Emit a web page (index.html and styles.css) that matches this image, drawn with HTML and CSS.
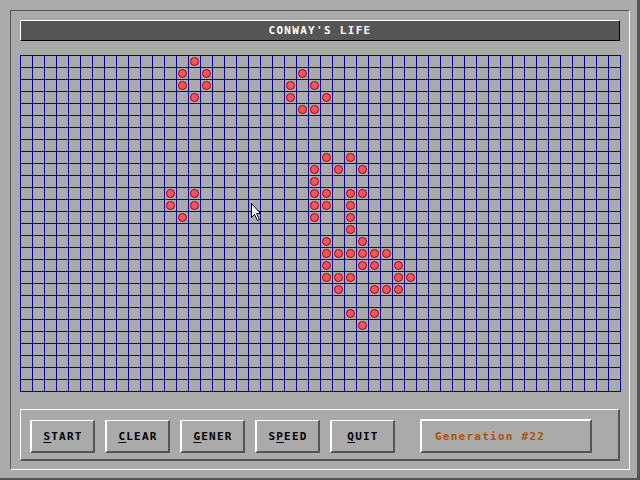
FILE: index.html
```html
<!DOCTYPE html>
<html>
<head>
<meta charset="utf-8">
<title>Conway's Life</title>
<link rel="stylesheet" href="styles.css">
</head>
<body>
<div class="screen">
  <div class="frame">
    <div class="title">CONWAY'S LIFE</div>
    <div class="board">
      <i class="cell" style="grid-area:1/15"></i>
      <i class="cell" style="grid-area:2/14"></i>
      <i class="cell" style="grid-area:2/16"></i>
      <i class="cell" style="grid-area:2/24"></i>
      <i class="cell" style="grid-area:3/14"></i>
      <i class="cell" style="grid-area:3/16"></i>
      <i class="cell" style="grid-area:3/23"></i>
      <i class="cell" style="grid-area:3/25"></i>
      <i class="cell" style="grid-area:4/15"></i>
      <i class="cell" style="grid-area:4/23"></i>
      <i class="cell" style="grid-area:4/26"></i>
      <i class="cell" style="grid-area:5/24"></i>
      <i class="cell" style="grid-area:5/25"></i>
      <i class="cell" style="grid-area:9/26"></i>
      <i class="cell" style="grid-area:9/28"></i>
      <i class="cell" style="grid-area:10/25"></i>
      <i class="cell" style="grid-area:10/27"></i>
      <i class="cell" style="grid-area:10/29"></i>
      <i class="cell" style="grid-area:11/25"></i>
      <i class="cell" style="grid-area:12/13"></i>
      <i class="cell" style="grid-area:12/15"></i>
      <i class="cell" style="grid-area:12/25"></i>
      <i class="cell" style="grid-area:12/26"></i>
      <i class="cell" style="grid-area:12/28"></i>
      <i class="cell" style="grid-area:12/29"></i>
      <i class="cell" style="grid-area:13/13"></i>
      <i class="cell" style="grid-area:13/15"></i>
      <i class="cell" style="grid-area:13/25"></i>
      <i class="cell" style="grid-area:13/26"></i>
      <i class="cell" style="grid-area:13/28"></i>
      <i class="cell" style="grid-area:14/14"></i>
      <i class="cell" style="grid-area:14/25"></i>
      <i class="cell" style="grid-area:14/28"></i>
      <i class="cell" style="grid-area:15/28"></i>
      <i class="cell" style="grid-area:16/26"></i>
      <i class="cell" style="grid-area:16/29"></i>
      <i class="cell" style="grid-area:17/26"></i>
      <i class="cell" style="grid-area:17/27"></i>
      <i class="cell" style="grid-area:17/28"></i>
      <i class="cell" style="grid-area:17/29"></i>
      <i class="cell" style="grid-area:17/30"></i>
      <i class="cell" style="grid-area:17/31"></i>
      <i class="cell" style="grid-area:18/26"></i>
      <i class="cell" style="grid-area:18/29"></i>
      <i class="cell" style="grid-area:18/30"></i>
      <i class="cell" style="grid-area:18/32"></i>
      <i class="cell" style="grid-area:19/26"></i>
      <i class="cell" style="grid-area:19/27"></i>
      <i class="cell" style="grid-area:19/28"></i>
      <i class="cell" style="grid-area:19/32"></i>
      <i class="cell" style="grid-area:19/33"></i>
      <i class="cell" style="grid-area:20/27"></i>
      <i class="cell" style="grid-area:20/30"></i>
      <i class="cell" style="grid-area:20/31"></i>
      <i class="cell" style="grid-area:20/32"></i>
      <i class="cell" style="grid-area:22/28"></i>
      <i class="cell" style="grid-area:22/30"></i>
      <i class="cell" style="grid-area:23/29"></i>
    </div>
    <div class="panel">
      <div class="btn"><u>S</u>TART</div>
      <div class="btn"><u>C</u>LEAR</div>
      <div class="btn"><u>G</u>ENER</div>
      <div class="btn">S<u>P</u>EED</div>
      <div class="btn"><u>Q</u>UIT</div>
      <div class="gen">Generation #22</div>
    </div>
  </div>
  <svg class="cursor" width="12" height="19" viewBox="0 0 12 19">
    <path d="M0.5 0.5 L0.5 14.5 L3.5 11.5 L6.5 17.5 L8.5 16.5 L5.5 10.5 L9.5 10.5 Z" fill="#fff" stroke="#000" stroke-width="1"/>
  </svg>
</div>
</body>
</html>
```

FILE: styles.css
```css
html, body {
  margin: 0;
  padding: 0;
  background: #aaaaaa;
}

.screen {
  position: relative;
  width: 640px;
  height: 480px;
  box-sizing: border-box;
  background: #aaaaaa;
  border-right: 3px solid #555555;
  border-bottom: 2px solid #555555;
  padding: 10px 0 0 10px;
  font-family: "DejaVu Sans Mono", "Liberation Mono", monospace;
}

.frame {
  width: 620px;
  height: 460px;
  box-sizing: border-box;
  border-top: 1px solid #555555;
  border-left: 1px solid #555555;
  border-right: 1px solid #ffffff;
  border-bottom: 1px solid #ffffff;
  padding: 9px 0 0 9px;
  display: flex;
  flex-direction: column;
}

.title {
  width: 600px;
  height: 21px;
  box-sizing: border-box;
  background: #555555;
  border-top: 1px solid #ffffff;
  border-left: 1px solid #ffffff;
  border-right: 1px solid #000000;
  border-bottom: 1px solid #000000;
  color: #ffffff;
  font-weight: bold;
  font-size: 11px;
  letter-spacing: 1.3px;
  display: flex;
  align-items: center;
  justify-content: center;
  line-height: 1;
}

.board {
  margin-top: 14px;
  width: 601px;
  height: 337px;
  box-sizing: border-box;
  padding: 0 1px 1px 0;
  display: grid;
  grid-template-columns: repeat(50, 12px);
  grid-template-rows: repeat(28, 12px);
  background-image:
    linear-gradient(to right, #0000aa 1px, transparent 1px),
    linear-gradient(to bottom, #0000aa 1px, transparent 1px);
  background-size: 12px 12px;
}

.cell {
  display: block;
  width: 9px;
  height: 9px;
  margin: 2px 0 0 2px;
  box-sizing: border-box;
  border-radius: 50%;
  background: #ff5555;
  border: 1px solid #aa0000;
}

.panel {
  margin-top: 17px;
  width: 600px;
  height: 52px;
  box-sizing: border-box;
  border-top: 1px solid #ffffff;
  border-left: 1px solid #ffffff;
  border-right: 2px solid #555555;
  border-bottom: 2px solid #555555;
  padding: 10px 0 0 9px;
  display: flex;
  align-items: flex-start;
  gap: 10px;
}

.btn {
  width: 65px;
  height: 33px;
  box-sizing: border-box;
  border-top: 1px solid #ffffff;
  border-left: 2px solid #ffffff;
  border-right: 2px solid #555555;
  border-bottom: 2px solid #555555;
  display: flex;
  align-items: center;
  justify-content: center;
  color: #000000;
  font-weight: bold;
  font-size: 11px;
  letter-spacing: 1.2px;
  line-height: 1;
  padding-left: 1px;
}

.btn u {
  text-decoration-thickness: 1px;
  text-underline-offset: 2px;
}

.gen {
  margin-left: 15px;
  margin-top: -1px;
  width: 172px;
  height: 34px;
  box-sizing: border-box;
  border-top: 2px solid #ffffff;
  border-left: 2px solid #ffffff;
  border-right: 2px solid #555555;
  border-bottom: 2px solid #555555;
  padding-left: 13px;
  display: flex;
  align-items: center;
  color: #aa5500;
  font-weight: bold;
  font-size: 11px;
  letter-spacing: 1.25px;
  line-height: 1;
}

.cursor {
  position: absolute;
  left: 251px;
  top: 203px;
}
```
